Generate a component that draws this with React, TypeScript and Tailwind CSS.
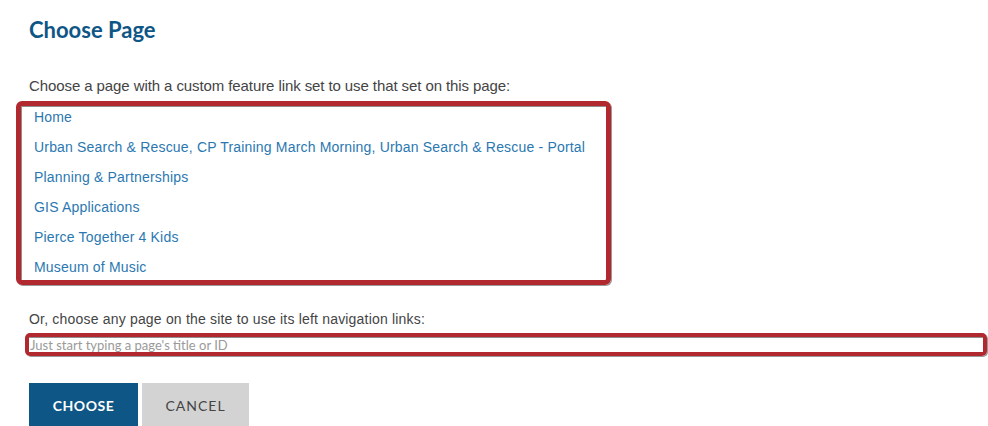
const pages = [
  'Home',
  'Urban Search & Rescue, CP Training March Morning, Urban Search & Rescue - Portal',
  'Planning & Partnerships',
  'GIS Applications',
  'Pierce Together 4 Kids',
  'Museum of Music',
]

export default function App() {
  return (
    <div className="min-h-screen bg-white pl-[29px] pt-[17px] font-['Liberation_Sans',Arial,sans-serif] text-[14px] text-[#444]">
      {/* Header */}
      <h1 className="font-['Lato',sans-serif] text-[22px] font-bold leading-[26px] text-[#0e5686]">
        Choose Page
      </h1>

      <p className="mt-[33px] text-[15px] leading-[20px] tracking-[-0.09px]">
        Choose a page with a custom feature link set to use that set on this page:
      </p>

      {/* Feature link set list */}
      <div className="ml-[-13px] mt-[5px] w-[595px] rounded-[6px] border-[5px] border-[#b1282f] shadow-[1px_1px_0_#9a9a9a]">
        <div className="flex flex-col gap-[10px] border-l border-t border-[#8f8f8f] pb-[3px] pl-[12px]">
          {pages.map((page) => (
            <a key={page} href="#" className="leading-[20px] tracking-[0.18px] text-[#2b78b1]">
              {page}
            </a>
          ))}
        </div>
      </div>

      <p className="mt-[24px] leading-[20px] tracking-[0.19px]">
        Or, choose any page on the site to use its left navigation links:
      </p>

      {/* Page search */}
      <div className="ml-[-4px] mt-[4px] w-[962px] rounded-[5px] border-[4px] border-[#b1282f] shadow-[1px_1px_0_#9a9a9a]">
        <input
          type="text"
          placeholder="Just start typing a page's title or ID"
          className="block h-[15px] w-full border-t border-[#8f8f8f] bg-white px-px font-['Lato',sans-serif] text-[13px] leading-[15px] outline-none placeholder:text-[#9a9a9a]"
        />
      </div>

      {/* Actions */}
      <div className="mt-[27px] flex gap-[4px]">
        <button className="h-[44px] w-[109px] bg-[#0e5686] font-['Lato',sans-serif] text-[14px] font-bold tracking-[0.5px] text-white">
          CHOOSE
        </button>
        <button className="h-[44px] w-[107px] bg-[#d3d3d3] font-['Lato',sans-serif] text-[14px] tracking-[1px] text-[#444]">
          CANCEL
        </button>
      </div>
    </div>
  )
}
